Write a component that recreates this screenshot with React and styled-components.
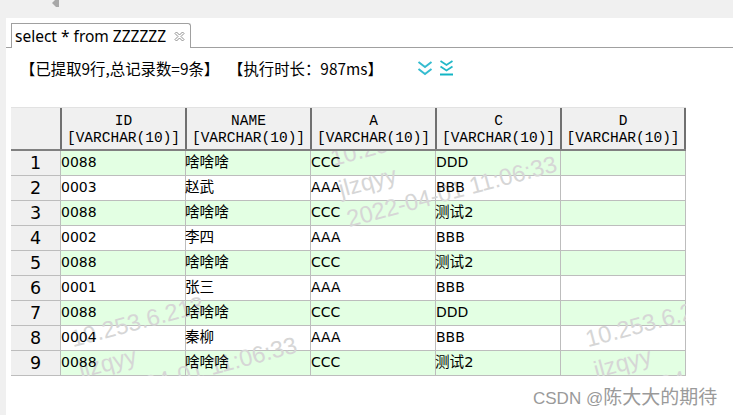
import React from "react";
import styled, { createGlobalStyle } from "styled-components";

const Global = createGlobalStyle`
  html, body { margin: 0; padding: 0; background: #fff; }
  body { width: 733px; height: 415px; overflow: hidden; font-family: "DejaVu Sans", "Noto Sans CJK SC", sans-serif; color: #000; }
`;

const Page = styled.div`
  position: relative;
  width: 733px;
  height: 415px;
  display: flex;
  flex-direction: column;
  overflow: hidden;
`;
const TopBar = styled.div`
  height: 18px;
  flex: none;
  background: #f0f0f0;
  padding-left: 52px;
`;
const Main = styled.div`
  flex: 1;
  display: flex;
  min-height: 0;
`;
const LeftStrip = styled.div`
  width: 6px;
  flex: none;
  background: #f0f0f0;
`;
const Content = styled.div`
  flex: 1;
  padding-top: 5px;
  min-width: 0;
`;
const TabStrip = styled.div`
  display: flex;
  height: 25px;
  padding-left: 5px;
  border-bottom: 1px solid #a0a0a0;
  box-sizing: border-box;
`;
const Tab = styled.div`
  width: 180px;
  height: 25px;
  box-sizing: border-box;
  display: flex;
  align-items: center;
  gap: 8px;
  padding: 0 0 0 3px;
  background: #fff;
  border: 1px solid #a0a0a0;
  border-bottom: none;
  border-radius: 0 3px 0 0;
  font: 15.5px "Noto Sans", "Noto Sans CJK SC", sans-serif;
  white-space: nowrap;
`;
const Status = styled.div`
  display: flex;
  align-items: center;
  height: 18px;
  margin-top: 11px;
  padding-left: 14px;
  font: 15.4px "Noto Sans CJK SC", sans-serif;
  white-space: nowrap;
`;
const StatusText = styled.span`
  width: ${p => p.$w}px;
  flex: none;
`;
const Icons = styled.div`
  display: flex;
  gap: 6px;
  align-items: center;
  margin-top: -1px;
`;
const Table = styled.div`
  margin: 30px 0 0 5px;
  width: 675px;
  display: flex;
  flex-direction: column;
`;
const Head = styled.div`
  display: grid;
  grid-template-columns: 51px repeat(4, 125px) 124px;
  height: 44px;
  box-sizing: border-box;
  background: #f0f0f0;
  border-top: 1px solid #e2e2e2;
  border-bottom: 2px solid #808080;
`;
const HeadCell = styled.div`
  box-sizing: border-box;
  border-right: 2px solid #707070;
  display: flex;
  flex-direction: column;
  align-items: center;
  justify-content: center;
  padding-top: 2px;
  font: 14.5px/17px "Liberation Mono", monospace;
  white-space: nowrap;
`;
const Body = styled.div`
  position: relative;
`;
const Row = styled.div`
  display: grid;
  grid-template-columns: 49px repeat(4, 125px) 126px;
  width: 675px;
  height: 25px;
  box-sizing: border-box;
  border-bottom: 1px solid #bdbdbd;
  background: ${p => (p.$alt ? "#e3ffe3" : "#fff")};
`;
const RowHead = styled.div`
  background: #f0f0f0;
  font: 17.5px "DejaVu Sans", sans-serif;
  display: flex;
  align-items: center;
  justify-content: center;
  position: relative;
  z-index: 2;
`;
const Cell = styled.div`
  box-sizing: border-box;
  border-left: 1px solid #bdbdbd;
  display: flex;
  align-items: center;
  padding-bottom: 2px;
  font-size: 14px;
  white-space: nowrap;
  &:last-child { border-right: 1px solid #bdbdbd; }
`;
const CellText = styled.span`
  position: relative;
  z-index: 2;
  line-height: 16px;
  font-size: ${p => (p.$wide ? "14.6px" : "14px")};
  margin-left: ${p => (p.$wide ? "-1px" : "0")};
`;
const Marks = styled.div`
  position: absolute;
  left: 49px;
  top: 0;
  right: 0;
  bottom: 0;
  overflow: hidden;
  z-index: 1;
  pointer-events: none;
`;
const Mark = styled.div`
  position: absolute;
  left: ${p => p.$x}px;
  top: ${p => p.$y}px;
  transform: rotate(-15deg);
  transform-origin: 0 0;
  color: #d6d6d6;
  font: 23.5px/31.5px "Liberation Sans", sans-serif;
  white-space: nowrap;
`;
const Credit = styled.div`
  position: absolute;
  left: 533px;
  top: 382px;
  color: #9a9a9a;
  font: 17px "Liberation Sans", "Noto Sans CJK SC", sans-serif;
  white-space: nowrap;
`;
const CreditName = styled.span`
  font-size: 19px;
`;

const Arrow = () => (
  <svg width="7" height="7" viewBox="0 0 7 7" style={{ display: "block" }}>
    <path d="M0 3 L3 0 H7 V7 H4 Z" fill="#a8a8a8" />
  </svg>
);
const CloseIcon = () => (
  <svg width="11" height="11" viewBox="0 0 11 11" style={{ flex: "none" }}>
    <path d="M1 2.5 L2.5 1 L5.5 4 L8.5 1 L10 2.5 L7 5.5 L10 8.5 L8.5 10 L5.5 7 L2.5 10 L1 8.5 L4 5.5 Z" fill="#fff" stroke="#8f8f8f" strokeWidth="1" />
  </svg>
);
const DoubleDown = () => (
  <svg width="16" height="16" viewBox="0 0 16 16">
    <path d="M1.5 2 L8 7 L14.5 2 M1.5 9 L8 14 L14.5 9" fill="none" stroke="#35bcd0" strokeWidth="2" />
  </svg>
);
const ToBottom = () => (
  <svg width="15" height="16" viewBox="0 0 15 16">
    <path d="M1.5 1 L7.5 5 L13.5 1 M1.5 6.5 L7.5 10.5 L13.5 6.5" fill="none" stroke="#22b8c8" strokeWidth="1.8" />
    <path d="M1 14.5 H14" stroke="#12b5c4" strokeWidth="2" />
  </svg>
);

const columns = ["ID", "NAME", "A", "C", "D"];
const rows = [
  ["0088", "啥啥啥", "CCC", "DDD", ""],
  ["0003", "赵武", "AAA", "BBB", ""],
  ["0088", "啥啥啥", "CCC", "测试2", ""],
  ["0002", "李四", "AAA", "BBB", ""],
  ["0088", "啥啥啥", "CCC", "测试2", ""],
  ["0001", "张三", "AAA", "BBB", ""],
  ["0088", "啥啥啥", "CCC", "DDD", ""],
  ["0004", "秦柳", "AAA", "BBB", ""],
  ["0088", "啥啥啥", "CCC", "测试2", ""],
];
const marks = [
  { x: 267, y: -7 },
  { x: 7, y: 174 },
  { x: 522, y: 174 },
];

export default function App() {
  return (
    <Page>
      <Global />
      <TopBar><Arrow /></TopBar>
      <Main>
        <LeftStrip />
        <Content>
          <TabStrip>
            <Tab>select * from ZZZZZZ<CloseIcon /></Tab>
          </TabStrip>
          <Status>
            <StatusText $w={208}>【已提取9行,总记录数=9条】</StatusText>
            <StatusText $w={189}>【执行时长：987ms】</StatusText>
            <Icons><DoubleDown /><ToBottom /></Icons>
          </Status>
          <Table>
            <Head>
              <HeadCell />
              {columns.map(c => (
                <HeadCell key={c}><span>{c}</span><span>[VARCHAR(10)]</span></HeadCell>
              ))}
            </Head>
            <Body>
              {rows.map((r, i) => (
                <Row key={i} $alt={i % 2 === 0}>
                  <RowHead>{i + 1}</RowHead>
                  {r.map((v, j) => (
                    <Cell key={j}><CellText $wide={/[^\x00-\x7f]/.test(v)}>{v}</CellText></Cell>
                  ))}
                </Row>
              ))}
              <Marks>
                {marks.map((m, i) => (
                  <Mark key={i} $x={m.x} $y={m.y}>
                    10.253.6.213<br />jlzqyy<br />2022-04-01 11:06:33
                  </Mark>
                ))}
              </Marks>
            </Body>
          </Table>
        </Content>
      </Main>
      <Credit>CSDN @<CreditName>陈大大的期待</CreditName></Credit>
    </Page>
  );
}
